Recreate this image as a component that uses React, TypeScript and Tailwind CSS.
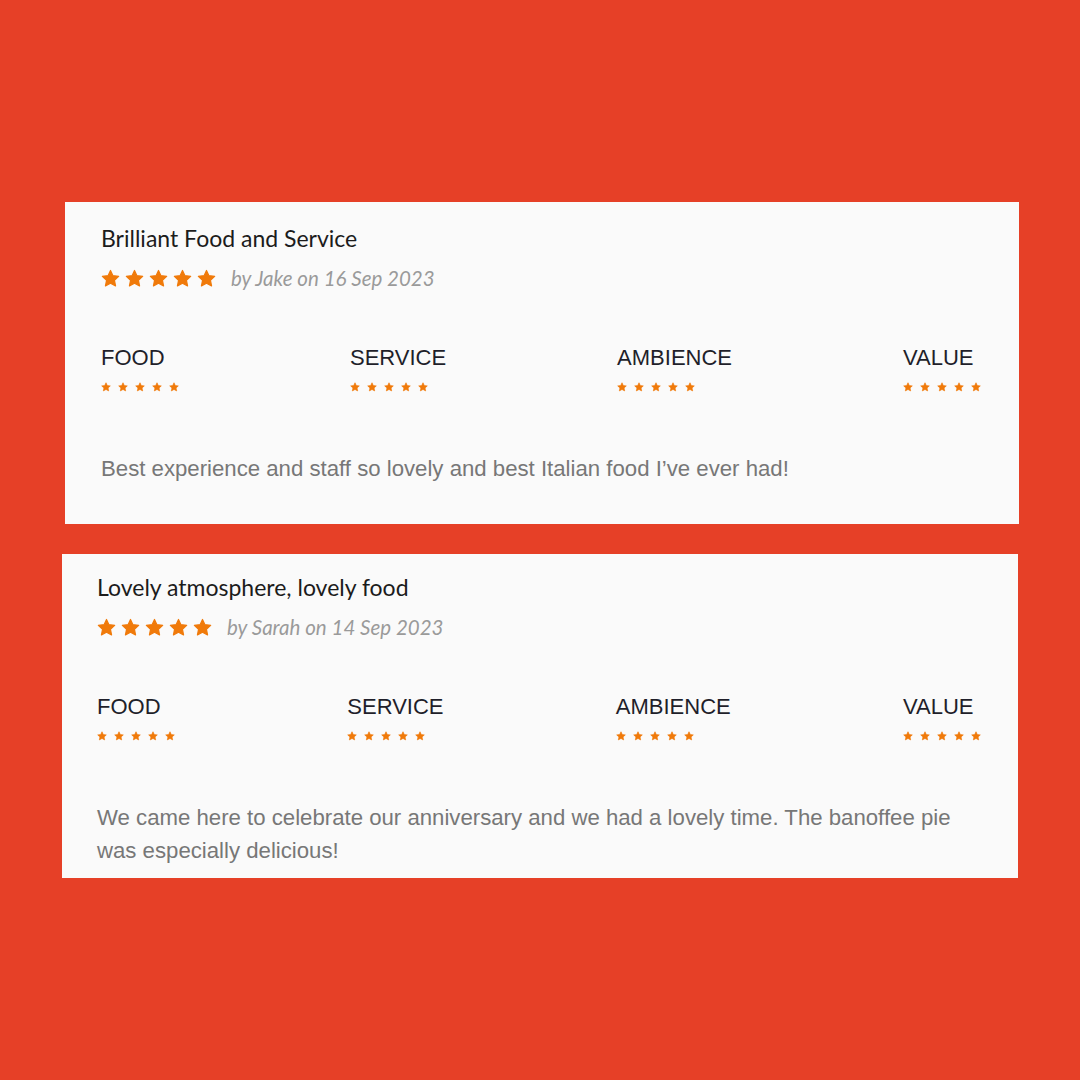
const reviews = [
  {
    title: "Brilliant Food and Service",
    author: "Jake",
    date: "16 Sep 2023",
    text: "Best experience and staff so lovely and best Italian food I’ve ever had!",
    card: "ml-[65px] w-[954px] h-[322px] pl-[36px] pr-[38px] pt-[21px]",
  },
  {
    title: "Lovely atmosphere, lovely food",
    author: "Sarah",
    date: "14 Sep 2023",
    text: "We came here to celebrate our anniversary and we had a lovely time. The banoffee pie was especially delicious!",
    card: "ml-[62px] w-[956px] h-[324px] pl-[35px] pr-[37px] pt-[18px]",
  },
];

const categories = ["FOOD", "SERVICE", "AMBIENCE", "VALUE"];

function Star({ size }: { size: number }) {
  return (
    <svg width={size} height={size} viewBox="0 0 24 24" className="shrink-0">
      <path
        d="M12 1.8l3.1 6.6 7.2.9-5.3 5 1.4 7.1L12 17.9l-6.4 3.5 1.4-7.1-5.3-5 7.2-.9z"
        fill="#F07A0A"
        stroke="#F07A0A"
        strokeWidth="1.5"
        strokeLinejoin="round"
      />
    </svg>
  );
}

function Stars({ size, gap }: { size: number; gap: string }) {
  return (
    <div className={`flex items-center ${gap}`}>
      {[0, 1, 2, 3, 4].map((i) => (
        <Star key={i} size={size} />
      ))}
    </div>
  );
}

export default function App() {
  return (
    <div className="min-h-[1080px] w-[1080px] bg-[#E64027] pt-[202px]">
      <div className="flex flex-col gap-[30px]">
        {reviews.map((r) => (
          <div key={r.title} className={`bg-[#FAFAFA] ${r.card}`}>
            <h2 className="text-[23px] leading-[30px] text-[#1c1c1c] font-['Lato',sans-serif]">
              {r.title}
            </h2>
            <div className="mt-[11px] flex items-center">
              <Stars size={19} gap="gap-[5px]" />
              <span className="ml-[15px] text-[20.5px] leading-[28px] italic text-[#9a9a9a] font-['Lato',sans-serif]">
                by {r.author} on {r.date}
              </span>
            </div>
            <div className="mt-[54px] flex justify-between">
              {categories.map((c) => (
                <div key={c} className="flex flex-col">
                  <span className="text-[22px] leading-[24px] text-[#1f1f2a] font-['Liberation_Sans',Arial,sans-serif]">
                    {c}
                  </span>
                  <div className="mt-[12px]">
                    <Stars size={10} gap="gap-[7px]" />
                  </div>
                </div>
              ))}
            </div>
            <p className="mt-[60px] text-[22.2px] leading-[33px] text-[#777777] font-['Liberation_Sans',Arial,sans-serif]">
              {r.text}
            </p>
          </div>
        ))}
      </div>
    </div>
  );
}
